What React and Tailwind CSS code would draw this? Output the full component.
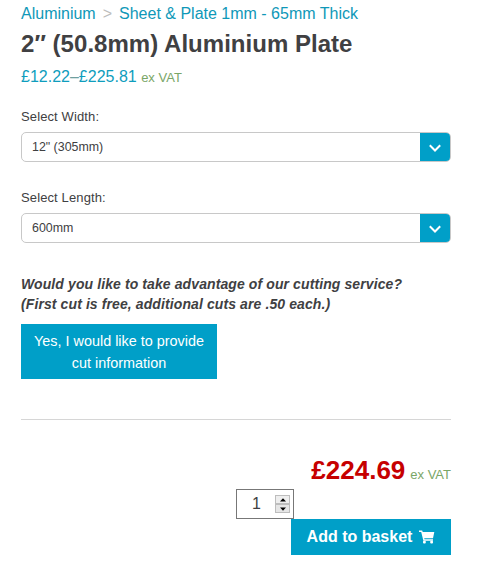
const SELECTS = [
  { id: 'width', label: 'Select Width:', value: '12" (305mm)' },
  { id: 'length', label: 'Select Length:', value: '600mm' },
];

const SelectField = ({ label, value }) => (
  <div className="mb-[25px]">
    <div className="mb-[5px] text-[13px] leading-[21px] tracking-[0.12px]">{label}</div>
    <button className="flex h-[30px] w-full items-stretch overflow-hidden rounded-[5px] border border-[#c8c8c8] text-left">
      <span className="flex-1 pl-2.5 text-[12.4px] leading-[28px]">{value}</span>
      <span className="-my-px -mr-px flex w-[31px] items-center justify-center bg-[#009fc8]">
        <svg width="12" height="8" viewBox="0 0 12 8" className="mr-0.5 mt-0.5" fill="none" stroke="#fff" strokeWidth="2">
          <path d="M.8 1.3L6 6.5l5.2-5.2" />
        </svg>
      </span>
    </button>
  </div>
);

const CartIcon = () => (
  <svg width="16" height="14" viewBox="0 0 16 14" fill="#fff">
    <path d="M0 .5h3.2l.5 1.5h11.6L14 8.2H5.2l.3 1.1H14v1.5H4.4L2.2 2H0z" />
    <rect x="4" y="10.8" width="2.8" height="2.7" rx="1" />
    <rect x="11.2" y="10.8" width="2.8" height="2.7" rx="1" />
  </svg>
);

const Stepper = () => (
  <span className="flex h-[18px] w-[15px] flex-col">
    <span className="flex flex-1 items-center justify-center border border-[#bdbdbd] bg-[#eeeeee]">
      <svg width="6" height="4" viewBox="0 0 6 4"><path d="M3 .3L6 3.6H0z" /></svg>
    </span>
    <span className="flex flex-1 items-center justify-center border border-[#bdbdbd] bg-[#e6e6e6]">
      <svg width="6" height="4" viewBox="0 0 6 4"><path d="M3 3.7L6 .4H0z" /></svg>
    </span>
  </span>
);

const App = () => (
  <main className="h-[574px] w-[478px] bg-white pl-[21px] pr-[27px] pt-[3px] font-['Liberation_Sans',Arial,sans-serif] text-[#404042]">
    <nav className="flex text-[16px] leading-[21px] text-[#0f98b8]">
      <a>Aluminium</a>
      <span className="mx-[7px] text-[#bcbcbc]">&gt;</span>
      <a>Sheet &amp; Plate 1mm - 65mm Thick</a>
    </nav>

    <h1 className="mt-[5px] text-[24px] font-bold leading-[30px] tracking-[0.03px]">2″ (50.8mm) Aluminium Plate</h1>

    <p className="mb-[18px] mt-[7px] text-[16px] leading-[21px] text-[#0f9dbd]">
      £12.22<span className="text-[#6f9f9f]">–</span>£225.81 <span className="text-[13px] text-[#7aa667]">ex VAT</span>
    </p>

    {SELECTS.map((s) => (
      <SelectField key={s.id} label={s.label} value={s.value} />
    ))}

    <p className="mt-[31px] text-[14px] font-bold italic leading-[20px] tracking-[0.1px]">
      Would you like to take advantage of our cutting service?
      <br />
      (First cut is free, additional cuts are .50 each.)
    </p>

    <button className="mt-[10px] block h-[55px] w-[196px] bg-[#009fc8] px-2.5 text-center text-[14.4px] leading-[22px] text-white">
      Yes, I would like to provide cut information
    </button>

    <hr className="mt-[40px] border-[#d6d6d6]" />

    <div className="mt-[35px] flex h-[34px] items-baseline justify-end gap-[5px]">
      <strong className="text-[26px] leading-[30px] text-[#c60000]">£224.69</strong>
      <span className="text-[13px] text-[#7aa667]">ex VAT</span>
    </div>

    <div className="ml-[215px] flex h-[30px] w-[58px] items-center justify-end border border-[#777777] pr-[3px]">
      <span className="mr-[14px] text-[16px] leading-[28px]">1</span>
      <Stepper />
    </div>

    <button className="ml-auto flex h-[36px] w-[160px] items-center justify-center gap-[7px] bg-[#009fc8] text-[16px] font-bold text-white">
      Add to basket
      <CartIcon />
    </button>
  </main>
);

export default App;
